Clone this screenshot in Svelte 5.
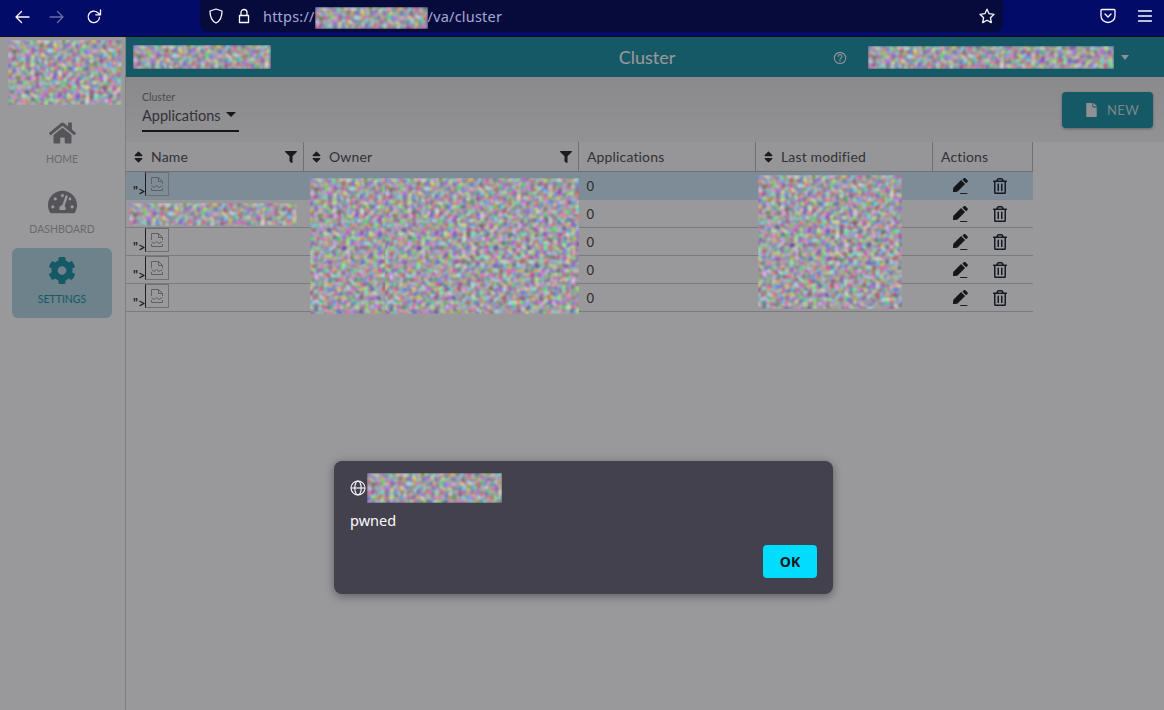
<script>
  const rows = [
    { id: 1, selected: true, broken: true },
    { id: 2, broken: false },
    { id: 3, broken: true },
    { id: 4, broken: true },
    { id: 5, broken: true }
  ]
  const sortPath = 'M41 288h238c21.4 0 32.1 25.9 17 41L177 448c-9.4 9.4-24.6 9.4-33.9 0L24 329c-15.1-15.1-4.4-41 17-41zm255-105L177 64c-9.4-9.4-24.6-9.4-33.9 0L24 183c-15.1 15.1-4.4 41 17 41h238c21.4 0 32.1-25.9 17-41z'
  const filterPath = 'M487.976 0H24.028C2.71 0-8.047 25.866 7.058 40.971L192 225.941V432c0 7.831 3.821 15.17 10.237 19.662l80 55.98C298.02 518.69 320 507.493 320 487.98V225.941l184.947-184.97C520.021 25.896 509.338 0 487.976 0z'
</script>

{#snippet noise(w, h, cls = '')}
  <svg class="noise {cls}" width={w} height={h} aria-hidden="true"><rect width={w} height={h} filter="url(#scramble)" /></svg>
{/snippet}

{#snippet sort()}
  <svg class="sort" viewBox="0 0 320 512"><path d={sortPath} /></svg>
{/snippet}

{#snippet funnel()}
  <svg class="funnel" viewBox="0 0 512 512"><path d={filterPath} /></svg>
{/snippet}

<svg class="defs" width="0" height="0" aria-hidden="true">
  <filter id="scramble" x="0" y="0" width="100%" height="100%" color-interpolation-filters="sRGB">
    <feTurbulence type="fractalNoise" baseFrequency="0.22" numOctaves="2" seed="7" />
    <feColorMatrix values="1.05 0 0 0 0.1  0 1.05 0 0 0.09  0 0 1.05 0 0.12  0 0 0 0 1" />
    <feGaussianBlur stdDeviation="0.9" />
  </filter>
</svg>

<div class="app">
  <nav class="browser">
    <div class="nav-btns">
      <svg viewBox="0 0 16 16"><path d="M15 8H2M7.5 2.5 2 8l5.500 5.500" /></svg>
      <svg class="off" viewBox="0 0 16 16"><path d="M1 8h13M8.500 2.500 14 8l-5.500 5.500" /></svg>
      <svg viewBox="0 0 16 16"><path d="M13.500 8.500A5.700 5.700 0 1 1 11.500 3.500L14 5.500M14.500 1v4.800H9.800" /></svg>
    </div>
    <div class="urlbar">
      <svg class="u-icon" viewBox="0 0 16 16"><path d="M8 1 2 3c0 6 1.500 10 6 12 4.500-2 6-6 6-12z" /></svg>
      <svg class="u-icon lock" viewBox="0 0 16 16"><path d="M3.500 7.500h9v7h-9zM5 7.500V4.500a3 3 0 0 1 6 0v3" /></svg>
      <span class="url">https://</span>
      {@render noise(113, 22, 'top')}
      <span class="url">/va/cluster</span>
      <svg class="u-icon star" viewBox="0 0 16 16"><path d="m8 1.200 2.100 4.500 4.900.6-3.600 3.400.9 4.900L8 12.200l-4.300 2.400.9-4.900L1 6.300l4.900-.6z" /></svg>
    </div>
    <div class="right-btns">
      <svg viewBox="0 0 16 16"><path d="M2 1.500h12a1 1 0 0 1 1 1V8a7 6.500 0 0 1-14 0V2.500a1 1 0 0 1 1-1zM5 6l3 3 3-3" /></svg>
      <svg viewBox="0 0 16 16"><path d="M1.500 3h13M1.500 8h13M1.500 13h13" /></svg>
    </div>
  </nav>

  <div class="shell">
    <aside>
      <div class="logo">{@render noise(114, 65, 'top')}</div>
      <div class="nav-item">
        <svg width="27" height="24" viewBox="0 0 576 512"><path d="M280.37 148.26L96 300.11V464a16 16 0 0 0 16 16l112.06-.29a16 16 0 0 0 15.92-16V368a16 16 0 0 1 16-16h64a16 16 0 0 1 16 16v95.64a16 16 0 0 0 16 16.05L464 480a16 16 0 0 0 16-16V300L295.67 148.26a12.19 12.19 0 0 0-15.3 0zM571.6 251.47L488 182.56V44.05a12 12 0 0 0-12-12h-56a12 12 0 0 0-12 12v72.61L318.47 43a48 48 0 0 0-61 0L4.34 251.47a12 12 0 0 0-1.6 16.9l25.5 31A12 12 0 0 0 45.15 301l235.22-193.74a12.19 12.19 0 0 1 15.3 0L530.9 301a12 12 0 0 0 16.9-1.6l25.5-31a12 12 0 0 0-1.7-16.93z" /></svg>
        <span>HOME</span>
      </div>
      <div class="nav-item">
        <svg width="29" height="26" viewBox="0 0 576 512"><path d="M288 32C128.94 32 0 160.94 0 320c0 52.8 14.25 102.26 39.06 144.8 5.61 9.62 16.3 15.2 27.44 15.2h443c11.14 0 21.83-5.58 27.44-15.2C561.75 422.26 576 372.8 576 320c0-159.06-128.94-288-288-288zm0 64c14.71 0 26.58 10.13 30.32 23.65-1.11 2.26-2.64 4.23-3.45 6.67l-9.22 27.67c-5.13 3.49-10.97 6.01-17.64 6.01-17.67 0-32-14.33-32-32S270.33 96 288 96zM96 384c-17.67 0-32-14.33-32-32s14.33-32 32-32 32 14.33 32 32-14.33 32-32 32zm48-160c-17.67 0-32-14.33-32-32s14.33-32 32-32 32 14.33 32 32-14.33 32-32 32zm246.77-72.41l-61.33 184C343.13 347.33 352 364.54 352 384c0 11.72-3.38 22.55-8.88 32H232.88c-5.5-9.45-8.88-20.28-8.88-32 0-33.94 26.5-61.43 59.9-63.59l61.34-184.01c4.17-12.56 17.73-19.45 30.36-15.17 12.57 4.19 19.35 17.77 15.17 30.36zm14.66 57.2l15.52-46.55c3.47-1.29 7.13-2.23 11.05-2.23 17.67 0 32 14.33 32 32s-14.33 32-32 32c-11.38-.01-20.89-6.28-26.57-15.22zM480 384c-17.67 0-32-14.33-32-32s14.33-32 32-32 32 14.33 32 32-14.33 32-32 32z" /></svg>
        <span>DASHBOARD</span>
      </div>
      <div class="nav-item active">
        <svg width="28" height="29" viewBox="0 0 512 512"><path d="M487.4 315.7l-42.6-24.6c4.3-23.2 4.3-47 0-70.2l42.6-24.6c4.9-2.8 7.1-8.6 5.500-14-11.1-35.6-30-67.8-54.7-94.6-3.8-4.100-10-5.100-14.8-2.300L380.8 110c-17.9-15.4-38.5-27.3-60.8-35.100V25.8c0-5.600-3.900-10.500-9.400-11.700-36.700-8.200-74.300-7.800-109.200 0-5.500 1.200-9.400 6.100-9.400 11.700V75c-22.200 7.900-42.800 19.800-60.800 35.100L88.700 85.500c-4.900-2.800-11-1.900-14.800 2.300-24.700 26.700-43.600 58.900-54.700 94.600-1.700 5.400.6 11.200 5.500 14L67.300 221c-4.300 23.200-4.300 47 0 70.200l-42.600 24.600c-4.900 2.800-7.100 8.600-5.500 14 11.100 35.600 30 67.800 54.700 94.600 3.800 4.100 10 5.100 14.800 2.300l42.600-24.600c17.900 15.400 38.500 27.300 60.800 35.100v49.200c0 5.600 3.900 10.500 9.400 11.700 36.700 8.200 74.300 7.800 109.200 0 5.500-1.200 9.400-6.100 9.400-11.700v-49.200c22.200-7.900 42.800-19.800 60.800-35.100l42.600 24.600c4.900 2.800 11 1.900 14.800-2.300 24.700-26.700 43.600-58.900 54.700-94.600 1.500-5.500-.7-11.300-5.600-14.100zM256 336c-44.100 0-80-35.900-80-80s35.900-80 80-80 80 35.900 80 80-35.900 80-80 80z" /></svg>
        <span>SETTINGS</span>
      </div>
    </aside>

    <main>
      <header class="topbar">
        {@render noise(138, 24, 'top')}
        <h1>Cluster</h1>
        <svg class="help" viewBox="0 0 16 16"><circle cx="8" cy="8" r="6.500" /><path d="M5.900 6.200a2.100 2.100 0 1 1 3.200 1.800c-.8.500-1.100.9-1.100 1.700M8 11v1" /></svg>
        {@render noise(246, 23, 'top')}
        <span class="user-caret"></span>
      </header>

      <div class="filterbar">
        <div class="select">
          <label for="cluster-select">Cluster</label>
          <div id="cluster-select" class="value">Applications <span class="caret"></span></div>
        </div>
        <button class="new">
          <svg width="11" height="14" viewBox="0 0 384 512"><path d="M224 136V0H24C10.700 0 0 10.700 0 24v464c0 13.300 10.700 24 24 24h336c13.300 0 24-10.700 24-24V160H248c-13.200 0-24-10.800-24-24zm160-14.100v6.100H256V0h6.100c6.400 0 12.500 2.500 17 7l97.900 98c4.500 4.500 7 10.600 7 16.900z" /></svg>
          NEW
        </button>
      </div>

      <div class="table-wrap">
        <table>
          <thead>
            <tr>
              <th class="c-name"><div class="th">{@render sort()}<span>Name</span>{@render funnel()}</div></th>
              <th class="c-owner"><div class="th">{@render sort()}<span>Owner</span>{@render funnel()}</div></th>
              <th class="c-apps"><div class="th"><span>Applications</span></div></th>
              <th class="c-mod"><div class="th">{@render sort()}<span>Last modified</span></div></th>
              <th class="c-act"><div class="th"><span>Actions</span></div></th>
            </tr>
          </thead>
          <tbody>
            {#each rows as row (row.id)}
              <tr class:selected={row.selected}>
                <td class="name-cell">
                  {#if row.broken}
                    <div class="xss">
                      <span>"&gt;</span>
                      <div class="broken">
                        <svg width="16" height="16" viewBox="0 0 16 16"><path d="M2.500 8V1.500h7l4 4V8M9.500 1.500v4h4M2.500 9.500l2.500 2 2.500-2 2.500 2 3.500-2M2.500 12v2.500h11V12" /></svg>
                      </div>
                    </div>
                  {:else}
                    {@render noise(168, 23, 'top row-noise')}
                  {/if}
                </td>
                <td></td>
                <td class="num">0</td>
                <td></td>
                <td>
                  <div class="actions">
                    <svg width="16" height="16" viewBox="0 0 512 512"><path d="M290.740 63.240l128.020 128.020-248 248-114.140 12.600C41.350 453.540 28.440 440.620 30.140 425.340l12.700-114.220 247.900-247.880zm177.200-19.060l-30.110-30.110c-18.750-18.750-49.160-18.750-67.910 0l-26.550 26.550c-6.250 6.250-6.250 16.380 0 22.630l98.020 98.020c6.250 6.250 16.380 6.250 22.630 0l26.550-26.550c18.750-18.750 18.750-49.150 0-67.900z" /><path d="M260 482h230v30H260z" /></svg>
                    <svg class="trash" width="14" height="16" viewBox="0 0 448 512"><path d="M268 416h24a12 12 0 0 0 12-12V188a12 12 0 0 0-12-12h-24a12 12 0 0 0-12 12v216a12 12 0 0 0 12 12zM432 80h-82.410l-34-56.700A48 48 0 0 0 274.410 0H173.590a48 48 0 0 0-41.160 23.300L98.410 80H16A16 16 0 0 0 0 96v16a16 16 0 0 0 16 16h16v336a48 48 0 0 0 48 48h288a48 48 0 0 0 48-48V128h16a16 16 0 0 0 16-16V96a16 16 0 0 0-16-16zM171.840 50.910A6 6 0 0 1 177 48h94a6 6 0 0 1 5.150 2.910L293.610 80H154.390zM368 464H80V128h288zm-212-48h24a12 12 0 0 0 12-12V188a12 12 0 0 0-12-12h-24a12 12 0 0 0-12 12v216a12 12 0 0 0 12 12z" /></svg>
                  </div>
                </td>
              </tr>
            {/each}
          </tbody>
        </table>
        <div class="cover owner-a">{@render noise(75, 136)}</div>
        <div class="cover owner-b">{@render noise(194, 136)}</div>
        <div class="cover modified">{@render noise(144, 134)}</div>
      </div>
    </main>
  </div>

  <div class="overlay">
    <div class="dialog">
      <div class="origin">
        <svg width="16" height="16" viewBox="0 0 16 16"><circle cx="8" cy="8" r="7" /><ellipse cx="8" cy="8" rx="3.200" ry="7" /><path d="M1 8h14" /></svg>
        {@render noise(135, 30, 'top')}
      </div>
      <p>pwned</p>
      <div class="dialog-foot"><button class="ok">OK</button></div>
    </div>
  </div>
</div>

<style>
  :global(body) { margin: 0; background: #fff; }
  .defs { position: absolute; }
  .app { position: relative; height: 710px; overflow: hidden; display: flex; flex-direction: column; font-family: Lato, "Open Sans", sans-serif; color: #38383c; }
  svg { display: block; flex: none; }
  .noise { display: block; flex: none; }
  .noise.top { position: relative; z-index: 5; }

  .browser { height: 36px; flex: none; background: #020c68; border-bottom: 1px solid #0c0c20; display: flex; align-items: flex-start; }
  .browser svg { fill: none; stroke: #fbfbfe; stroke-width: 1.300; stroke-linecap: round; stroke-linejoin: round; }
  .nav-btns { width: 200px; padding: 9px 0 0 14px; box-sizing: border-box; display: flex; gap: 20px; }
  .nav-btns svg { width: 16px; height: 16px; }
  .nav-btns .off { opacity: .4; margin-left: -1px; margin-right: 1px; }
  .urlbar { width: 803px; height: 32px; background: #070b3c; border-radius: 0 0 8px 8px; display: flex; align-items: center; padding-left: 8px; box-sizing: border-box; }
  .u-icon { width: 16px; height: 16px; }
  .lock { margin-left: 12px; margin-right: 11px; }
  .star { margin-left: auto; margin-right: 8px; }
  .url { font: 14.500px "Noto Sans", sans-serif; color: #a4a8d8; letter-spacing: .2px; white-space: nowrap; }
  .urlbar .noise { margin-top: 4px; }
  .right-btns { flex: 1; display: flex; padding: 8px 0 0 97px; gap: 21px; }
  .right-btns svg { width: 16px; height: 16px; }

  .shell { flex: 1; display: flex; min-height: 0; }
  aside { width: 126px; flex: none; box-sizing: border-box; border-right: 1px solid #d0d0d0; padding: 3px 2px 0 8px; background: #fff; display: flex; flex-direction: column; }
  .logo { height: 66px; margin-bottom: 2px; }
  .nav-item { width: 100px; height: 70px; margin-left: 4px; display: flex; flex-direction: column; align-items: center; justify-content: flex-end; box-sizing: border-box; padding-bottom: 13px; border-radius: 6px; font-size: 10.500px; color: #aaaaae; fill: #848488; gap: 8px; }
  .nav-item.active { background: #b0d8e2; color: #0f8a9e; fill: #0f8a9e; }

  main { flex: 1; min-width: 0; background: #fff; display: flex; flex-direction: column; }
  .topbar { height: 40px; flex: none; background: #0f8a9e; display: flex; align-items: center; padding-left: 7px; }
  h1 { margin: 0; font-size: 18px; font-weight: 400; width: 545px; text-align: center; padding-left: 207px; box-sizing: border-box; color: #fff; }
  .help { width: 14px; height: 14px; margin: 1px 21px 0 17px; fill: none; stroke: #e8f2f4; stroke-width: 1.300; stroke-linecap: round; }
  .user-caret { margin-left: 7px; border: 4px solid transparent; border-top: 5px solid #e8f2f4; border-bottom: 0; }

  .filterbar { height: 65px; flex: none; background: linear-gradient(#e4e4e4, #f2f2f2); display: flex; justify-content: space-between; box-sizing: border-box; padding: 14px 11px 0 16px; }
  .select { width: 97px; height: 39px; border-bottom: 2px solid #111; }
  label { display: block; font-size: 10.500px; color: #707074; margin-bottom: 4px; }
  .value { display: flex; align-items: center; gap: 5px; font-size: 14.500px; color: #45454a; }
  .caret { border: 5px solid transparent; border-top: 5px solid #111; border-bottom: 0; margin-top: -3px; }
  .new { width: 91px; height: 36px; margin-top: 1px; padding: 0 0 0 10px; border: 0; border-radius: 4px; background: #0f8a9e; color: #c8dce0; fill: #f0f0f0; display: flex; align-items: center; justify-content: center; gap: 10px; font: 13px Lato, sans-serif; letter-spacing: .3px; box-shadow: 0 1px 3px rgba(0,0,0,.35); }

  .table-wrap { position: relative; width: 907px; }
  table { width: 907px; table-layout: fixed; border-collapse: collapse; font-size: 14px; }
  th { height: 29px; padding: 0; background: #fafafa; font-weight: 400; text-align: left; border-bottom: 1px solid #b4b4b4; border-right: 1px solid #b4b4b4; color: #45454a; font-size: 14px; letter-spacing: .15px; }
  .c-name { width: 177px; }
  .c-owner { width: 274px; }
  .c-apps { width: 176px; }
  .c-mod { width: 176px; }
  .c-act { width: 99px; }
  .th { display: flex; align-items: center; padding: 0 8px; gap: 8px; }
  .sort { width: 9px; height: 14px; fill: #1c1c1e; }
  .funnel { width: 12px; height: 12px; margin-left: auto; margin-right: -2px; fill: #1c1c1e; }
  td { height: 27px; padding: 0; border-bottom: 1px solid #c8c8c8; background: #fff; }
  tr.selected td { background: #cdeaf6; border-bottom-color: #cdeaf6; }
  .num { padding-left: 8px; font-size: 13px; }
  .name-cell { overflow: visible; padding-left: 7px; }
  .xss { display: flex; align-items: flex-end; height: 24px; margin-top: -3px; }
  .xss span { font: 600 13px Lato, sans-serif; width: 12px; color: #111; line-height: 12px; margin-bottom: -1px; white-space: nowrap; }
  .broken { width: 22px; height: 22px; border: 1px solid #b4b4b4; border-left-color: #222; display: flex; align-items: center; justify-content: center; }
  .broken svg { fill: none; stroke: #999; stroke-width: 1; }
  :global(.row-noise) { margin: 2px 0 0 -4px; }
  .actions { display: flex; align-items: center; padding: 1px 0 0 19px; gap: 25px; fill: #111; }
  .trash { fill: #15182c; }
  .cover { position: absolute; z-index: 5; }
  .owner-a { left: 184px; top: 36px; }
  .owner-b { left: 259px; top: 36px; }
  .modified { left: 632px; top: 33px; }

  .overlay { position: absolute; inset: 37px 0 0 0; z-index: 4; background: rgba(28,27,34,.45); display: flex; justify-content: center; align-items: flex-start; padding: 424px 0 0 3px; box-sizing: border-box; }
  .dialog { position: relative; z-index: 6; width: 499px; height: 133px; box-sizing: border-box; background: #42414d; border-radius: 8px; padding: 12px 16px; color: #fbfbfe; box-shadow: 0 2px 10px rgba(0,0,0,.4); font-family: "Noto Sans", sans-serif; }
  .origin { display: flex; align-items: center; gap: 1px; }
  .origin svg { fill: none; stroke: #fbfbfe; stroke-width: 1.100; }
  p { margin: 7px 0 0; font-size: 14.500px; line-height: 20px; }
  .dialog-foot { display: flex; justify-content: flex-end; margin-top: 15px; }
  .ok { width: 54px; height: 33px; border: 0; border-radius: 4px; background: #00ddff; color: #15141a; font: 700 14px "Noto Sans", sans-serif; padding: 0; }
</style>
